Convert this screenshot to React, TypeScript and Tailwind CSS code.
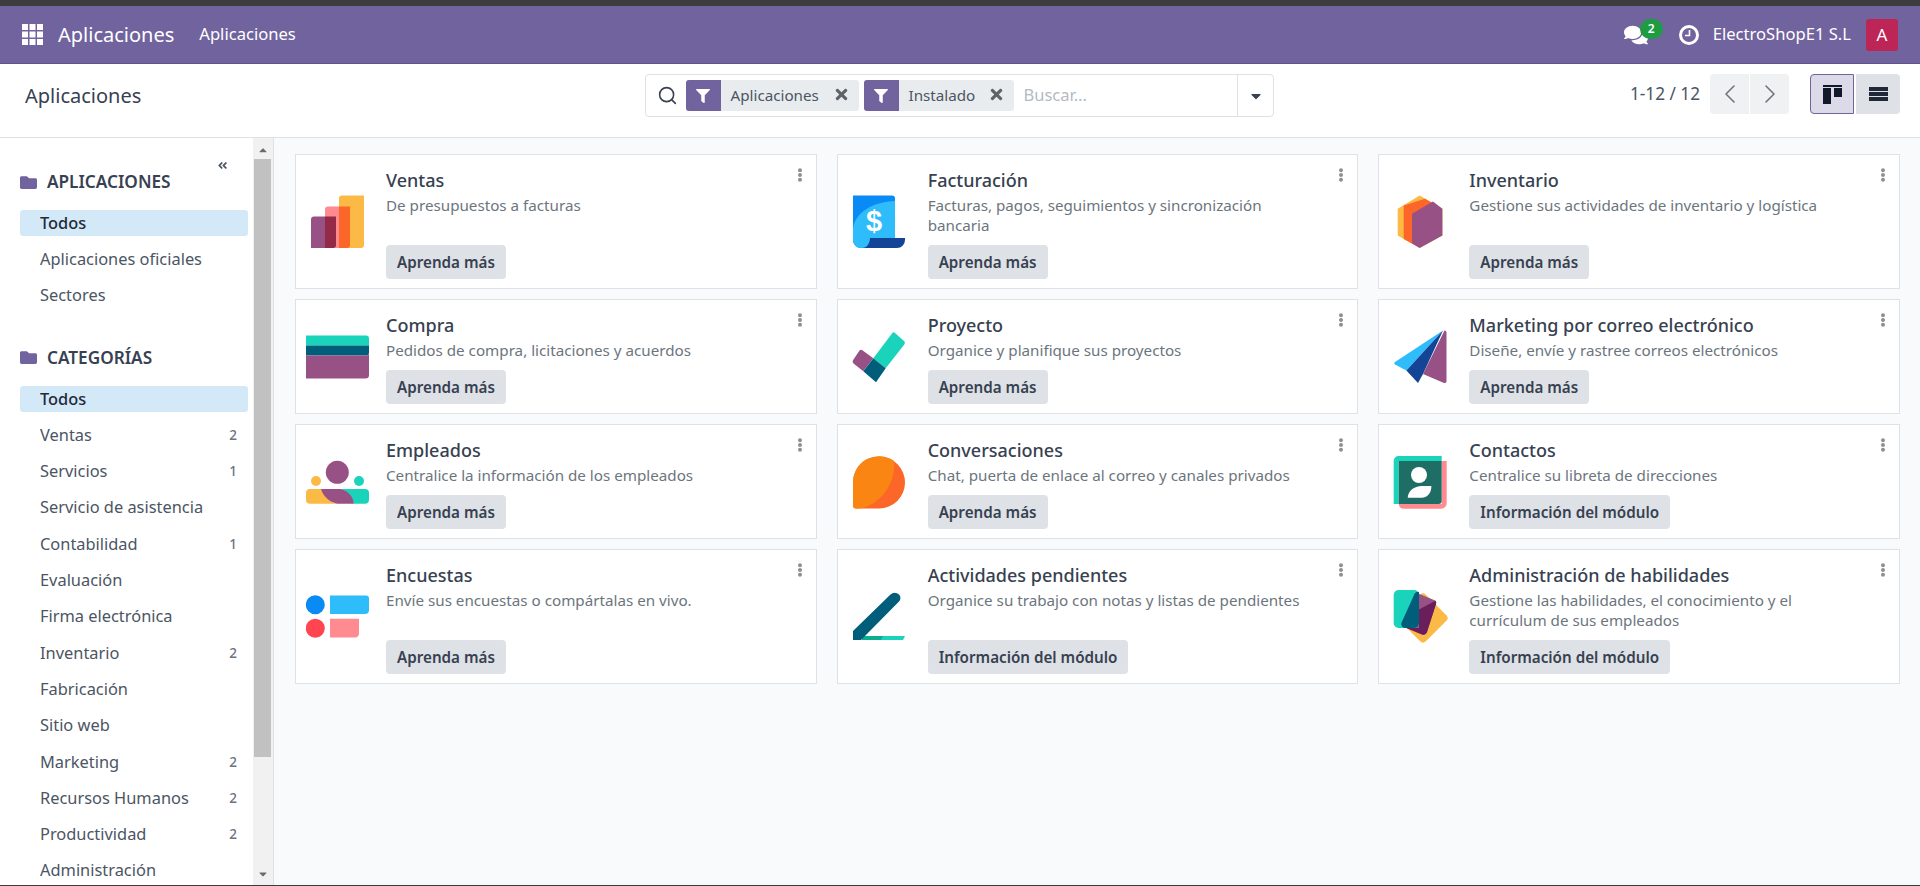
import React from "react";
import { ChevronLeft, ChevronRight, Search } from "lucide-react";
import {
	FaAngleDoubleLeft,
	FaCaretDown,
	FaCaretUp,
	FaComments,
	FaEllipsisV,
	FaFilter,
	FaFolder,
	FaTimes,
} from "react-icons/fa";

const teal = "#1AD3BB";
const darkTeal = "#005E7A";
const purple = "#985184";
const yellow = "#FBB945";
const orange = "#FC6628";
const pink = "#FF8A8F";
const blue = "#0A8AF5";
const skyBlue = "#2EBCFA";
const navy = "#144496";

const icons: Record<string, React.ReactNode> = {
	ventas: (
		<>
			<path d="M36 5.5h22v49.500a3 3 0 0 1-3 3H33V8.500a3 3 0 0 1 3-3z" fill={yellow} />
			<path d="M22 16.500h11V58H19V19.500a3 3 0 0 1 3-3z" fill={pink} />
			<path d="M33 16.500h11V55a3 3 0 0 1-3 3h-8z" fill={orange} />
			<path d="M8 26.500h11V58H5V29.500a3 3 0 0 1 3-3z" fill={purple} />
			<path d="M19 26.500h11V55a3 3 0 0 1-3 3h-8z" fill="#932A47" />
		</>
	),
	facturacion: (
		<>
			<path d="M5 5.500h39a3 3 0 0 1 3 3V48H17v10h-4a8 8 0 0 1-8-8z" fill={blue} />
			<path d="M5 38C8 22 24 12 47 11v37H24c0 6-4 10-9 10h-2a8 8 0 0 1-8-8z" fill={skyBlue} />
			<path d="M22 48h35v2a8 8 0 0 1-8 8H14c5 0 8-5 8-10z" fill={navy} />
			<text x="26" y="41" textAnchor="middle" fontSize="29" fontWeight="700" fontFamily="'Liberation Sans', sans-serif" fill="#fff">
				$
			</text>
		</>
	),
	inventario: (
		<>
			<path d="M30.700 5.500 53.400 18.800V45.500L30.700 58 8.700 45.500V18.800z" fill={yellow} />
			<path d="M14.700 15.500 36 8.800 46 14.500 23 53.500 14.700 49z" fill={orange} />
			<path d="M23 23.800 44 11.500 53.400 18.800V45.500L30.700 58 23 53.500z" fill={purple} />
		</>
	),
	compra: (
		<>
			<path d="M0 10.500h60a3 3 0 0 1 3 3v7H0z" fill={teal} />
			<path d="M0 20.500h63v7a3 3 0 0 1-3 3H0z" fill={darkTeal} />
			<path d="M0 30.500h60a3 3 0 0 0 3-3V50a3.500 3.500 0 0 1-3.500 3.500H0z" fill={purple} />
		</>
	),
	proyecto: (
		<>
			<path d="M44 8.500a2 2 0 0 1 3-.5l9 8a2.500 2.500 0 0 1 .5 3.200L37.700 43.200 25.300 33.200z" fill={teal} />
			<path d="M25.300 33.200 37.700 43.200 28 57.200 15.300 46.200z" fill={darkTeal} />
			<path d="M11.500 25.500a2 2 0 0 1 2.500-.5l11.300 8.200-10 13-9.500-7.500a3 3 0 0 1-.5-4z" fill={purple} />
		</>
	),
	marketing: (
		<>
			<path d="M54 5.500 17.400 45.500 6 39.500a1.500 1.500 0 0 1 0-2.500z" fill={skyBlue} />
			<path d="M54 5.500 34 49 29 58 17.400 45.500z" fill={navy} />
			<path d="M55.500 5.500a2 2 0 0 1 2 2V56a2 2 0 0 1-2.500 2L34 49z" fill={purple} />
		</>
	),
	empleados: (
		<>
			<circle cx="31.300" cy="22.300" r="11.500" fill={purple} />
			<circle cx="10" cy="31" r="5" fill={yellow} />
			<circle cx="53" cy="31" r="5" fill={teal} />
			<path d="M4 39h12c2 7 7 13 15 14.700H4a4 4 0 0 1-4-4V43a4 4 0 0 1 4-4z" fill={yellow} />
			<path d="M35 39h24a4 4 0 0 1 4 4v6.700a4 4 0 0 1-4 4H48C46 46 41 41 35 39z" fill={teal} />
			<path d="M15 39h20c7 2 12 7 13 14.700H31C23 52 17 46 15 39z" fill={purple} />
		</>
	),
	conversaciones: (
		<>
			<path d="M5 32a26 26 0 1 1 26 26.500H8a3 3 0 0 1-3-3z" fill={orange} />
			<path d="M5 32A26 26 0 0 1 46 11C48 32 34 54 12 58.500H8a3 3 0 0 1-3-3z" fill="#FB8513" />
		</>
	),
	contactos: (
		<>
			<path d="M9.700 54H52.700V11h5v42a5.500 5.500 0 0 1-5.500 5.700H15a5.300 5.300 0 0 1-5.300-4.700z" fill={pink} />
			<path d="M10 6h42.700v5H9.700v43h-5V11a5 5 0 0 1 5-5z" fill={teal} />
			<path d="M9.700 11h43v40a3 3 0 0 1-3 3h-40z" fill="#1E6E66" />
			<circle cx="30" cy="25" r="8" fill="#fff" />
			<path d="M18.700 47.700C19 41 25 36 33 36h9.400c0 6-3 11.700-10 11.700z" fill="#fff" />
		</>
	),
	encuestas: (
		<>
			<circle cx="9.300" cy="19.800" r="9.500" fill={blue} />
			<path d="M24 10.500h36a3 3 0 0 1 3 3V25a4 4 0 0 1-4 4H24z" fill={skyBlue} />
			<circle cx="9.300" cy="43.200" r="9.500" fill="#FF4650" />
			<path d="M24 33.800h29V48a4 4 0 0 1-4 4.500H24z" fill={pink} />
		</>
	),
	actividades: (
		<>
			<path d="M14 51h43l-2 4H14z" fill={teal} />
			<path d="M14 51h21l-2 4H14z" fill="#0BAF90" />
			<path d="M5 46 42.500 9.500a6 6 0 0 1 8.500 0 5 5 0 0 1 0 7L13 55H5z" fill={darkTeal} />
		</>
	),
	habilidades: (
		<>
			<rect x="15.500" y="14.500" width="37" height="37" rx="4" transform="rotate(45 34 33)" fill={yellow} />
			<path d="M28 8 45 15a3 3 0 0 1 2 4L38 47a4 4 0 0 1-5 2.500L17.400 43z" fill={purple} />
			<path d="M30 24.500 46.500 15.800a3 3 0 0 1 .5 3.200L38 47a4 4 0 0 1-5 2.500L17.400 43H30z" fill="#6B1E5C" />
			<rect x="4.700" y="5" width="25.300" height="38" rx="5" fill={teal} />
			<path d="M25.700 8.500A4 4 0 0 1 30 7V38a5 5 0 0 1-5 5H16a4 4 0 0 1-3.600-5z" fill={darkTeal} />
		</>
	),
};

const rows = [
	["ventas", "Ventas", "De presupuestos a facturas", "Aprenda más"],
	["facturacion", "Facturación", "Facturas, pagos, seguimientos y sincronización bancaria", "Aprenda más"],
	["inventario", "Inventario", "Gestione sus actividades de inventario y logística", "Aprenda más"],
	["compra", "Compra", "Pedidos de compra, licitaciones y acuerdos", "Aprenda más"],
	["proyecto", "Proyecto", "Organice y planifique sus proyectos", "Aprenda más"],
	["marketing", "Marketing por correo electrónico", "Diseñe, envíe y rastree correos electrónicos", "Aprenda más"],
	["empleados", "Empleados", "Centralice la información de los empleados", "Aprenda más"],
	["conversaciones", "Conversaciones", "Chat, puerta de enlace al correo y canales privados", "Aprenda más"],
	["contactos", "Contactos", "Centralice su libreta de direcciones", "Información del módulo"],
	["encuestas", "Encuestas", "Envíe sus encuestas o compártalas en vivo.", "Aprenda más"],
	["actividades", "Actividades pendientes", "Organice su trabajo con notas y listas de pendientes", "Información del módulo"],
	["habilidades", "Administración de habilidades", "Gestione las habilidades, el conocimiento y el currículum de sus empleados", "Información del módulo"],
];

const categories: [string, number?][] = [
	["Ventas", 2],
	["Servicios", 1],
	["Servicio de asistencia"],
	["Contabilidad", 1],
	["Evaluación"],
	["Firma electrónica"],
	["Inventario", 2],
	["Fabricación"],
	["Sitio web"],
	["Marketing", 2],
	["Recursos Humanos", 2],
	["Productividad", 2],
	["Administración"],
];

function Facet({ label, width }: { label: string; width: string }) {
	return (
		<div className={`flex h-[31px] items-center rounded-[3px] bg-[#e9ecef] ${width}`}>
			<span className="flex h-full w-[35px] items-center justify-center rounded-l-[3px] bg-[#71639e] text-white">
				<FaFilter size={14} />
			</span>
			<span className="ml-[10px] text-[15.200px] text-[#4b5563]">{label}</span>
			<FaTimes size={17} className="mb-[3px] ml-auto mr-[9px] text-[#5f6368]" />
		</div>
	);
}

function SideRow({ label, count, active }: { label: string; count?: number; active?: boolean }) {
	return (
		<div
			className={`mb-[10.300px] flex h-[26px] items-center justify-between rounded-[3px] pl-5 pr-[11px] text-[16.400px] ${
				active ? "bg-[#d3e9f8] font-medium text-[#1f2937]" : "text-[#4b5563]"
			}`}
		>
			<span>{label}</span>
			{count && <span className="text-[13.500px] font-medium text-[#6b7280]">{count}</span>}
		</div>
	);
}

function SideHeader({ label }: { label: string }) {
	return (
		<div className="mb-[16px] flex h-[24px] items-center gap-[10px] text-[17.200px] font-semibold text-[#374151]">
			<FaFolder size={17} className="text-[#71639e]" />
			{label}
		</div>
	);
}

function Card({ row }: { row: string[] }) {
	const [icon, title, text, action] = row;
	return (
		<div className="relative flex items-center border border-[#dee2e6] bg-white pl-[10px] pr-[40px]">
			<svg viewBox="0 0 64 64" className="h-16 w-16 shrink-0">
				{icons[icon]}
			</svg>
			<div className="ml-4 flex h-full min-w-0 flex-1 flex-col pb-[9px] pt-[12px]">
				<div className="text-[18px] font-medium leading-[26px] text-[#374151]">{title}</div>
				<div className="mt-[2px] text-[15.200px] leading-[20px] text-[#6c757d]">{text}</div>
				<div className="mt-auto pt-[10px]">
					<span className="inline-flex h-[34px] items-center rounded-[4px] bg-[#dee2e6] px-[11px] text-[15.200px] font-semibold text-[#374151]">
						{action}
					</span>
				</div>
			</div>
			<FaEllipsisV size={14} className="absolute right-[9px] top-[13px] text-[#8f8f8f]" />
		</div>
	);
}

export default function App() {
	return (
		<div className="flex h-[886px] w-[1920px] flex-col overflow-hidden bg-white font-['Noto_Sans',sans-serif]">
			<div className="h-[6px] bg-[#3c3c3c]" />

			<header className="flex h-[58px] items-center border-b border-[#5f5388] bg-[#71639e] pr-[22px] text-white">
				<svg viewBox="0 0 21 21" className="ml-[22px] h-[21px] w-[21px]" fill="#fff">
					<path d="M0 0h6v6H0zM7.500 0h6v6h-6zM15 0h6v6h-6zM0 7.500h6v6H0zM7.500 7.500h6v6h-6zM15 7.500h6v6h-6zM0 15h6v6H0zM7.500 15h6v6h-6zM15 15h6v6h-6z" />
				</svg>
				<span className="ml-[15px] text-[20px]">Aplicaciones</span>
				<span className="ml-[25px] text-[16.600px]">Aplicaciones</span>
				<div className="relative ml-auto mr-[31px]">
					<FaComments size={24} />
					<span className="absolute left-[16px] top-[-4px] flex h-[20px] w-[23px] items-center justify-center rounded-full bg-[#1f9c43] text-[12px] font-semibold">
						2
					</span>
				</div>
				<svg viewBox="0 0 20 20" className="h-5 w-5" fill="none" stroke="#fff">
					<circle cx="10" cy="10" r="8.500" strokeWidth="3" />
					<path d="M10.500 5v5.500H6" strokeWidth="1.600" />
				</svg>
				<span className="ml-[14px] text-[16.600px]">ElectroShopE1 S.L</span>
				<span className="ml-[15px] flex h-8 w-8 items-center justify-center rounded-[3px] bg-[#bc2556] text-[17px]">
					A
				</span>
			</header>

			<div className="flex h-[74px] items-start border-b border-[#dee2e6] pr-5 pt-[10px]">
				<h1 className="flex h-[43px] w-[645px] items-center pl-[25px] text-[20px] font-normal text-[#374151]">
					Aplicaciones
				</h1>
				<div className="flex h-[43px] w-[629px] items-center rounded-[4px] border border-[#dee2e6] pl-[11px]">
					<Search size={21} strokeWidth={1.800} className="mr-[7.500px] text-[#374151]" />
					<Facet label="Aplicaciones" width="w-[173px]" />
					<div className="w-[5px]" />
					<Facet label="Instalado" width="w-[150px]" />
					<span className="ml-[10px] text-[16.500px] text-[#b4bac1]">Buscar...</span>
					<span className="ml-auto flex h-full w-[36px] items-center justify-center border-l border-[#dee2e6] text-[#374151]">
						<FaCaretDown size={16} />
					</span>
				</div>
				<span className="ml-auto mr-[10px] flex h-[40px] items-center text-[17.200px] text-[#4b5563]">1-12 / 12</span>
				<div className="flex h-[40px] w-[79px] overflow-hidden rounded-[4px] bg-[#eff1f2] text-[#6c757d]">
					<span className="flex flex-1 items-center justify-center border-r border-white">
						<ChevronLeft size={32} strokeWidth={1.200} />
					</span>
					<span className="flex flex-1 items-center justify-center">
						<ChevronRight size={32} strokeWidth={1.200} />
					</span>
				</div>
				<div className="ml-[21px] flex h-[40px] gap-[2px]">
					<span className="flex w-[44px] items-center justify-center rounded-l-[4px] border border-[#71639e] bg-[#dcd9e8]">
						<svg viewBox="0 0 19 19" className="h-[19px] w-[19px]" fill="#111827">
							<path d="M0 0h19v2H0zM0 3h8v16H0zM11 3h8v9h-8z" />
						</svg>
					</span>
					<span className="flex w-[44px] items-center justify-center rounded-r-[4px] bg-[#dee2e6]">
						<svg viewBox="0 0 19 14" className="h-[14px] w-[19px]" fill="#1f2937">
							<path d="M0 0h19v4H0zM0 5h19v4H0zM0 10h19v4H0z" />
						</svg>
					</span>
				</div>
			</div>

			<div className="flex min-h-0 flex-1">
				<aside className="relative w-[253px] overflow-hidden pl-5 pr-[5px] pt-[32px]">
					<FaAngleDoubleLeft size={11} className="absolute left-[217px] top-[22px] text-[#4b5563]" />
					<SideHeader label="APLICACIONES" />
					<SideRow label="Todos" active />
					<SideRow label="Aplicaciones oficiales" />
					<SideRow label="Sectores" />
					<div className="h-[27px]" />
					<SideHeader label="CATEGORÍAS" />
					<SideRow label="Todos" active />
					{categories.map(([label, count]) => (
						<SideRow key={label} label={label} count={count} />
					))}
				</aside>

				<div className="flex w-[21px] flex-col items-center border-r border-[#dee2e6] bg-[#f1f1f1] pr-[1px] text-[#6b6b6b]">
					<FaCaretUp size={12} className="mb-[3px] mt-[6px]" />
					<div className="h-[598px] w-[17px] bg-[#c1c1c1]" />
					<FaCaretDown size={12} className="mb-[5px] mt-auto" />
				</div>

				<main className="grid flex-1 grid-cols-3 content-start gap-x-5 gap-y-[10px] bg-[#f9fafb] pl-[21px] pr-5 pt-[16px]">
					{rows.map((row) => (
						<Card key={row[0]} row={row} />
					))}
				</main>
			</div>

			<div className="h-[1px] bg-[#3c3c3c]" />
		</div>
	);
}
